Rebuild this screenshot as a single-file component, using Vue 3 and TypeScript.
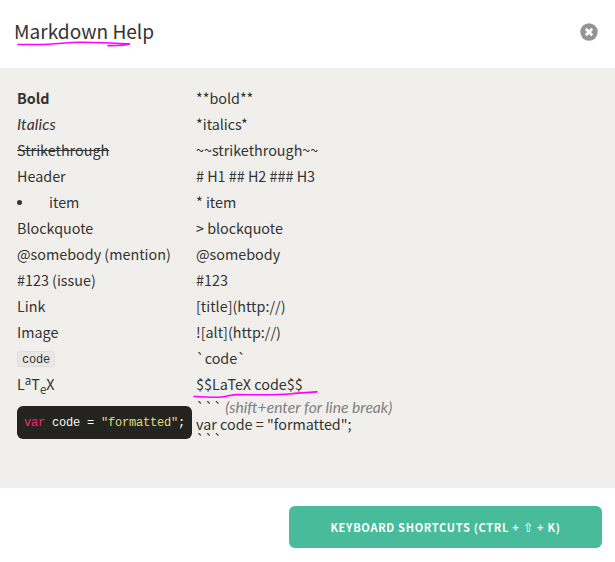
<script setup lang="ts">
interface Row {
  label: string
  syntax: string
  kind?: 'bold' | 'italic' | 'strike' | 'item' | 'code' | 'latex'
}

const rows: Row[] = [
  { label: 'Bold', syntax: '**bold**', kind: 'bold' },
  { label: 'Italics', syntax: '*italics*', kind: 'italic' },
  { label: 'Strikethrough', syntax: '~~strikethrough~~', kind: 'strike' },
  { label: 'Header', syntax: '# H1 ## H2 ### H3' },
  { label: 'item', syntax: '* item', kind: 'item' },
  { label: 'Blockquote', syntax: '> blockquote' },
  { label: '@somebody (mention)', syntax: '@somebody' },
  { label: '#123 (issue)', syntax: '#123' },
  { label: 'Link', syntax: '[title](http://)' },
  { label: 'Image', syntax: '![alt](http://)' },
  { label: 'code', syntax: '`code`', kind: 'code' },
  { label: 'LaTeX', syntax: '$$LaTeX code$$', kind: 'latex' },
]
</script>

<template>
  <div class="modal">
    <header class="head">
      <h1 class="title">Markdown Help
        <svg class="mark title-mark" viewBox="0 0 116 8" width="116" height="8">
          <path d="M1 4.5H26C44 4 48 2.2 64 2.2C84 2.2 95 3.5 113 3.8C108 5.8 99 5.6 91 5.6" />
        </svg>
      </h1>
      <button class="close" aria-label="Close">
        <svg viewBox="0 0 18 18" width="18" height="18">
          <circle cx="9" cy="9" r="8.7" fill="#949494" />
          <path d="M5.8 5.8L12.2 12.2M12.2 5.8L5.8 12.2" stroke="#fff" stroke-width="2.7" />
        </svg>
      </button>
    </header>
    <main class="body">
      <div v-for="row in rows" :key="row.label" class="row">
        <div class="label">
          <ul v-if="row.kind === 'item'" class="list"><li>{{ row.label }}</li></ul>
          <code v-else-if="row.kind === 'code'" class="chip">{{ row.label }}</code>
          <span v-else-if="row.kind === 'latex'">L<sup>a</sup>T<sub>e</sub>X</span>
          <span v-else :class="row.kind">{{ row.label }}</span>
        </div>
        <div class="syntax">
          {{ row.syntax }}
          <svg v-if="row.kind === 'latex'" class="mark latex-mark" viewBox="0 0 126 10" width="126" height="10">
            <path d="M1 6.5C10 7 22 7.7 29 7C36 6.3 37 4.5 46 4.6C68 5 86 5 99 3.7C108 2.8 116 2.6 124 1.9" />
          </svg>
        </div>
      </div>
      <div class="row block">
        <pre class="sample"><span class="kw">var</span> code = <span class="str">"formatted"</span>;</pre>
        <div class="fence">
          <div><span class="ticks">```</span> <em>(shift+enter for line break)</em></div>
          <div>var code = "formatted";</div>
          <div class="ticks">```</div>
        </div>
      </div>
    </main>
    <footer class="foot">
      <button class="shortcuts">KEYBOARD SHORTCUTS (CTRL + <span class="shift">⇧</span> + K)</button>
    </footer>
  </div>
</template>

<style>
body {
  margin: 0;
  background: #fff;
}
</style>

<style scoped>
.modal {
  width: 615px;
  height: 562px;
  overflow: hidden;
  color: #333;
  font: 14.35px/26px "Noto Sans CJK SC", sans-serif;
}
.head {
  display: flex;
  align-items: center;
  justify-content: space-between;
  height: 68px;
  box-sizing: border-box;
  padding: 0 17px 4px 14px;
}
.title {
  position: relative;
  margin: 0 0 2px;
  font-size: 19.1px;
  font-weight: 400;
  line-height: 32px;
}
.mark {
  position: absolute;
  fill: none;
  stroke: #f0f;
  stroke-width: 1.6;
  stroke-linecap: round;
  overflow: visible;
}
.title-mark {
  left: 3px;
  top: 25px;
}
.close {
  padding: 0;
  border: 0;
  background: none;
  display: flex;
}
.body {
  height: 420px;
  box-sizing: border-box;
  padding: 17px 17px 0;
  background: #f0efeb;
}
.row {
  display: grid;
  grid-template-columns: 179px 1fr;
  height: 26px;
  white-space: nowrap;
}
.syntax {
  position: relative;
}
.latex-mark {
  left: -3px;
  top: 19px;
}
.bold {
  font-weight: 700;
}
.italic,
em {
  font-family: Lato, sans-serif;
  font-size: 15.65px;
  line-height: 1;
  font-style: italic;
}
em {
  color: #808080;
}
.strike {
  text-decoration: line-through;
}
.italic {
  letter-spacing: 0.15px;
}
.list {
  display: flex;
  align-items: center;
  margin: 0;
  padding: 0;
  list-style: none;
}
.list::before {
  content: "";
  width: 5px;
  height: 5px;
  margin-right: 27px;
  border-radius: 50%;
  background: #333;
}
.chip {
  display: block;
  width: 38px;
  height: 16px;
  box-sizing: border-box;
  margin-top: 6px;
  padding-left: 4px;
  border: 1px solid #ddd;
  border-radius: 3px;
  background: #e8e7e4;
  font: 12px/17px "Liberation Mono", monospace;
  letter-spacing: -0.2px;
}
sup,
sub {
  font-size: 11.5px;
  line-height: 0;
  position: relative;
  vertical-align: baseline;
}
sup {
  top: -5px;
}
sub {
  top: 4px;
}
.block {
  height: auto;
}
.sample {
  width: 175px;
  height: 33px;
  box-sizing: border-box;
  margin: 9px 0 0;
  padding-left: 7px;
  border-radius: 6px;
  background: #23241f;
  color: #f8f8f2;
  font: 12px/35px "Liberation Mono", monospace;
  letter-spacing: -0.2px;
}
.kw {
  color: #f92672;
}
.str {
  color: #e6db74;
}
.fence {
  padding-top: 2px;
  line-height: 15.6px;
}
.foot {
  display: flex;
  justify-content: flex-end;
  padding: 18px 13px 0;
}
.shortcuts {
  width: 313px;
  height: 42px;
  padding: 0;
  border: 0;
  border-radius: 6px;
  background: #48bb9a;
  color: #fff;
  font: 700 11px/40px "Noto Sans CJK SC", sans-serif;
  letter-spacing: 0.7px;
}
.shift {
  font-family: "DejaVu Sans", sans-serif;
  font-size: 12.5px;
  line-height: 1;
  font-weight: 400;
}
</style>
